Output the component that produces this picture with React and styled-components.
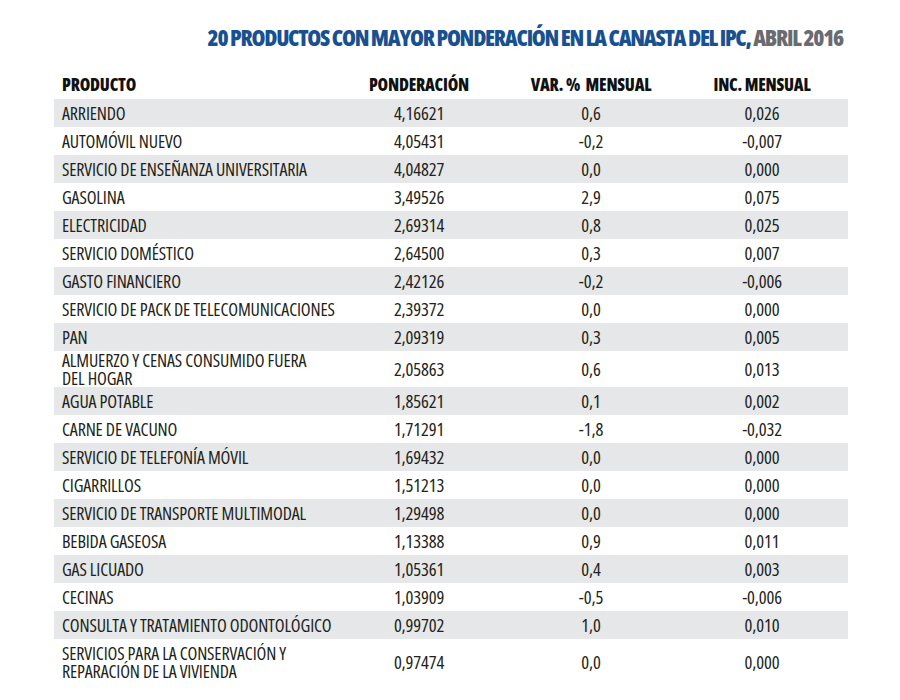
import React from 'react'
import styled, { createGlobalStyle } from 'styled-components'

const rows = [
  ['ARRIENDO', '4,16621', '0,6', '0,026'],
  ['AUTOMÓVIL NUEVO', '4,05431', '-0,2', '-0,007'],
  ['SERVICIO DE ENSEÑANZA UNIVERSITARIA', '4,04827', '0,0', '0,000'],
  ['GASOLINA', '3,49526', '2,9', '0,075'],
  ['ELECTRICIDAD', '2,69314', '0,8', '0,025'],
  ['SERVICIO DOMÉSTICO', '2,64500', '0,3', '0,007'],
  ['GASTO FINANCIERO', '2,42126', '-0,2', '-0,006'],
  ['SERVICIO DE PACK DE TELECOMUNICACIONES', '2,39372', '0,0', '0,000'],
  ['PAN', '2,09319', '0,3', '0,005'],
  [['ALMUERZO  Y CENAS CONSUMIDO FUERA', 'DEL HOGAR'], '2,05863', '0,6', '0,013'],
  ['AGUA POTABLE', '1,85621', '0,1', '0,002'],
  ['CARNE DE VACUNO', '1,71291', '-1,8', '-0,032'],
  ['SERVICIO DE TELEFONÍA MÓVIL', '1,69432', '0,0', '0,000'],
  ['CIGARRILLOS', '1,51213', '0,0', '0,000'],
  ['SERVICIO DE TRANSPORTE MULTIMODAL', '1,29498', '0,0', '0,000'],
  ['BEBIDA GASEOSA', '1,13388', '0,9', '0,011'],
  ['GAS LICUADO', '1,05361', '0,4', '0,003'],
  ['CECINAS', '1,03909', '-0,5', '-0,006'],
  ['CONSULTA Y TRATAMIENTO ODONTOLÓGICO', '0,99702', '1,0', '0,010'],
  [['SERVICIOS PARA LA CONSERVACIÓN Y', 'REPARACIÓN DE LA VIVIENDA'], '0,97474', '0,0', '0,000'],
]

const GlobalStyle = createGlobalStyle`
  body {
    margin: 0;
    background: #fff;
    font-family: "Open Sans", "Liberation Sans", sans-serif;
    font-stretch: condensed;
    color: #231f20;
  }
`

const Page = styled.div`
  width: 900px;
  padding: 25px 0 0 54px;
  box-sizing: border-box;
`

const Title = styled.h1`
  margin: 0 0 20px;
  padding-right: 57px;
  text-align: right;
  font-size: 22.5px;
  line-height: 26px;
  font-weight: 800;
  font-stretch: condensed;
  letter-spacing: -1.25px;
  color: #195090;
  white-space: nowrap;
`

const Date = styled.span`
  color: #6a6b70;
`

const Table = styled.div`
  width: 794px;
  display: flex;
  flex-direction: column;
`

const Row = styled.div`
  display: grid;
  grid-template-columns: 282px 150px 194px 148px;
  align-items: center;
  padding: ${p => (p.last ? '5px' : '0')} 12px 0 8px;
  min-height: 28px;
  background: ${p => (p.shaded ? '#e6e7e8' : 'transparent')};
  font-size: 18px;
  line-height: 18px;
  letter-spacing: -0.15px;
`

const HeadRow = styled(Row)`
  font-weight: 800;
  font-size: 17px;
  letter-spacing: -0.2px;
  color: #111;
  white-space: pre;
`

const Product = styled.div`
  text-align: left;
  white-space: nowrap;
`

const Value = styled.div`
  text-align: center;
  font-size: ${p => (p.head ? '17px' : '18.5px')};
`

export default function App() {
  return (
    <Page>
      <GlobalStyle />
      <Title>
        20 PRODUCTOS CON MAYOR PONDERACIÓN EN LA CANASTA DEL IPC, <Date>ABRIL 2016</Date>
      </Title>
      <Table>
        <HeadRow>
          <Product>PRODUCTO</Product>
          <Value head>PONDERACIÓN</Value>
          <Value head>{'VAR. %  MENSUAL'}</Value>
          <Value head>INC. MENSUAL</Value>
        </HeadRow>
        {rows.map(([name, pond, variation, inc], i) => {
          const tall = Array.isArray(name)
          return (
            <Row key={i} shaded={i % 2 === 0} last={i === rows.length - 1}>
              <Product>
                {tall ? (
                  <>
                    {name[0]}
                    <br />
                    {name[1]}
                  </>
                ) : (
                  name
                )}
              </Product>
              <Value>{pond}</Value>
              <Value>{variation}</Value>
              <Value>{inc}</Value>
            </Row>
          )
        })}
      </Table>
    </Page>
  )
}
